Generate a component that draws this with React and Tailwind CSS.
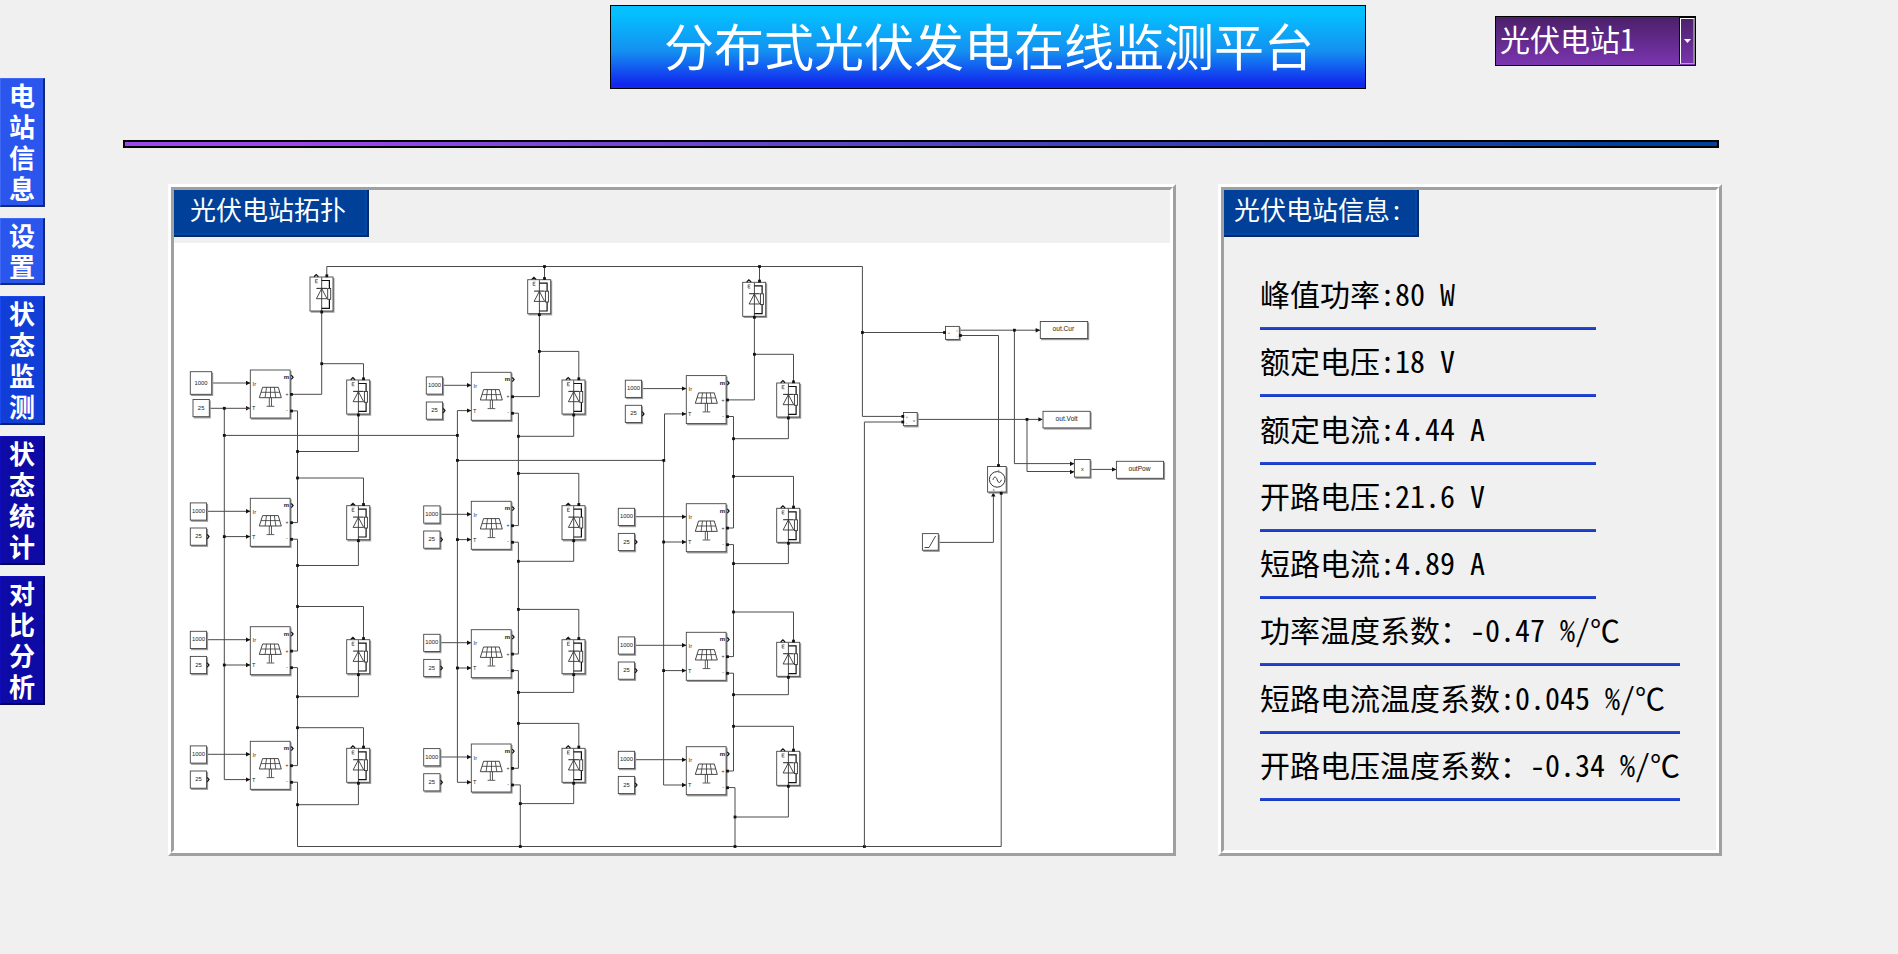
import React from "react";

const NAV = [
  { label: "电站信息", cls: "h-[129px] bg-[#2a56ee] border-t-[#3f68f5] border-l-[#3f68f5] border-r-[#14297a] border-b-[#14297a]" },
  { label: "设置", cls: "h-[67px] bg-[#2a56ee] border-t-[#3f68f5] border-l-[#3f68f5] border-r-[#14297a] border-b-[#14297a]" },
  { label: "状态监测", cls: "h-[129px] bg-[#123ed8] border-t-[#1a48ee] border-l-[#1a48ee] border-r-[#081f6c] border-b-[#081f6c]" },
  { label: "状态统计", cls: "h-[129px] bg-[#0d0aa5] border-t-[#100cb8] border-l-[#100cb8] border-r-[#060450] border-b-[#060450]" },
  { label: "对比分析", cls: "h-[129px] bg-[#0d0aa5] border-t-[#100cb8] border-l-[#100cb8] border-r-[#060450] border-b-[#060450]" },
];

const INFO = [
  { text: "峰值功率:80 W", width: "w-[336px]" },
  { text: "额定电压:18 V", width: "w-[336px]" },
  { text: "额定电流:4.44 A", width: "w-[336px]" },
  { text: "开路电压:21.6 V", width: "w-[336px]" },
  { text: "短路电流:4.89 A", width: "w-[336px]" },
  { text: "功率温度系数：-0.47 %/℃", width: "w-[420px]" },
  { text: "短路电流温度系数:0.045 %/℃", width: "w-[420px]" },
  { text: "开路电压温度系数：-0.34 %/℃", width: "w-[420px]" },
];

const INK = "#333";

const COLUMNS = [
  {
    pvX: 250.3, diodeX: 346.7, constX: 190.3, spine: 297.5, lastSpine: 297.5, tBus: 224.3,
    pvY: [370, 498.3, 626.7, 741.3], diodeY: [380, 505.7, 639.7, 748.3],
    low: [451.5, 565.5, 696.7, 804.7], high: [363.7, 478, 606.5, 727.7],
    top: { x: 310, y: 277 },
  },
  {
    pvX: 471.3, diodeX: 562, constX: 423.7, spine: 518.4, lastSpine: 520.3, tBus: 457.4,
    pvY: [372.3, 501.3, 629.7, 744], diodeY: [380, 505.7, 639.7, 748.3],
    low: [436.3, 561.3, 692.4, 803.6], high: [351.4, 473.4, 609.4, 723.4],
    top: { x: 527.7, y: 279.7 },
  },
  {
    pvX: 686.3, diodeX: 776.7, constX: 618.3, spine: 733.5, lastSpine: 735, tBus: 663.6,
    pvY: [375.6, 503.7, 632.3, 746.7], diodeY: [383, 508.3, 642.3, 751.3],
    low: [438.7, 563.6, 694.7, 817], high: [354.3, 476.4, 612, 726.3],
    top: { x: 742.7, y: 282.3 },
  },
];

function Wire({ d }) {
  return <path d={d} fill="none" stroke="#4a4a4a" strokeWidth="1" />;
}

function Dot({ x, y }) {
  return <rect x={x - 1.4} y={y - 1.4} width="2.8" height="2.8" fill="#111" />;
}

function Arrow({ x, y }) {
  return <path d={`M${x} ${y}l-4.3 -2.2v4.4z`} fill="#111" />;
}

function Box({ x, y, w, h }) {
  return (
    <g>
      <rect x={x + 0.8} y={y + 1} width={w + 0.7} height={h + 0.7} fill="#9a9a9a" />
      <rect x={x} y={y} width={w} height={h} fill="#fff" stroke="#444" strokeWidth="0.9" />
    </g>
  );
}

function Label({ x, y, size = 5.5, weight = 400, children }) {
  return (
    <text x={x} y={y} fontSize={size} fontWeight={weight} textAnchor="middle" fill="#222" fontFamily="Liberation Sans, Arial, sans-serif">
      {children}
    </text>
  );
}

function Constant({ x, y, w = 16.3, h = 17.2, value, open }) {
  return (
    <g>
      <Box x={x} y={y} w={w} h={h} />
      <Label x={x + w / 2} y={y + h / 2 + 1.5} size={5.9}>{value}</Label>
      {open && <path d={`M${x + w + 0.6} ${y + h / 2 - 2.2}l1.8 2.2l-1.8 2.2`} fill="none" stroke="#111" strokeWidth="1.2" />}
    </g>
  );
}

function Diode({ x, y }) {
  return (
    <g>
      <Box x={x} y={y} w={23} h={34} />
      <g transform={`translate(${x} ${y})`} fill="none" stroke={INK} strokeWidth="0.9">
        <path d="M4 -0.3L6.2 -2.4L8.4 -0.3" stroke="#111" strokeWidth="1.2" />
        <path d="M7.8 2.5H5.4V5.8H7.8M5.4 4.1H7.4" strokeWidth="0.6" />
        <path d="M11.7 0.5V34" />
        <path d="M11.7 3.5H19.4V31.3H11.7" stroke="#111" strokeWidth="1.2" />
        <rect x="17.7" y="11.5" width="3" height="10.8" fill="#fff" />
        <path d="M6.4 11.4H17" strokeWidth="1.1" />
        <path d="M11.7 11.6L17 21.7H6.4Z" fill="#fff" />
        <path d="M11.7 11.6V21.7" />
      </g>
      <Dot x={x + 16.8} y={y - 1.2} />
      <Dot x={x + 11.7} y={y + 35} />
    </g>
  );
}

function SolarModule({ x, y }) {
  return (
    <g>
      <Box x={x} y={y} w={39.8} h={48} />
      <g transform={`translate(${x} ${y})`} fill="none" stroke={INK} strokeWidth="0.8">
        <path d="M12.3 17.3H28L31 27.7H9Z" strokeWidth="0.9" />
        <path d="M10.8 22.3H29.5M16.2 17.3L14.8 27.7M20.2 17.3V27.7M24 17.3L25.5 27.7" />
        <path d="M19 27.7V36M21.2 27.7V36M16.3 36.3H24" />
        <path d="M41 5.2L42.8 7.3L41 9.4" stroke="#111" strokeWidth="1.2" />
      </g>
      <Label x={x + 36.2} y={y + 9} size={6} weight={700}>m</Label>
      <Label x={x + 4} y={y + 15.6} size={5.6}>Ir</Label>
      <Label x={x + 3.4} y={y + 40.3} size={5.6}>T</Label>
      <Label x={x + 36.6} y={y + 26} size={5}>+</Label>
      <Label x={x + 36.8} y={y + 42} size={5}>-</Label>
      <Dot x={x + 41.2} y={y + 24.4} />
      <Dot x={x + 41.2} y={y + 41} />
    </g>
  );
}

function StringColumn({ col, first, middle }) {
  const { pvX, diodeX, constX, spine, lastSpine, tBus, pvY, diodeY, low, high, top } = col;
  const out = pvX + 41;
  const plus = (i) => pvY[i] + 24.3;
  const minus = (i) => pvY[i] + 40.9;
  const tIn = (i) => pvY[i] + 38.3;
  const dTop = diodeX + 16.8;
  const dLow = diodeX + 11.7;
  const feed = top.x + 11.7;
  return (
    <g>
      <Wire d={`M${top.x + 16.8} 266.5V${top.y}`} />
      <Wire d={`M${out} ${plus(0)}H${feed}V${top.y + 34}`} />
      <Wire d={`M${feed} ${high[0]}H${dTop}V${diodeY[0]}`} />
      <Dot x={feed} y={high[0]} />
      <Wire d={`M${tBus} ${first || middle ? tIn(0) : 460.4}V${tIn(3)}H${pvX}`} />
      {[0, 1, 2, 3].map((i) => {
        const s = i === 3 ? lastSpine : spine;
        const big = first && i === 0;
        const cx = !first && i === 0 ? constX + (middle ? 2.6 : 7) : constX;
        return (
          <g key={i}>
            <Wire d={`M${out} ${minus(i)}H${s}V${i === 3 ? 846.5 : plus(i + 1)}${i === 3 ? "" : `H${out}`}`} />
            <Wire d={`M${s} ${low[i]}H${dLow}V${diodeY[i] + 34}`} />
            <Dot x={s} y={low[i]} />
            {i > 0 && <Wire d={`M${spine} ${high[i]}H${dTop}V${diodeY[i]}`} />}
            {i > 0 && <Dot x={spine} y={high[i]} />}
            {i > 0 && i < 3 && <Wire d={`M${tBus} ${tIn(i)}H${pvX}`} />}
            {i > 0 && i < 3 && <Dot x={tBus} y={tIn(i)} />}
            <Wire d={`M${cx + 16} ${pvY[i] + 13}H${pvX}`} />
            <Arrow x={pvX} y={pvY[i] + 13} />
            <Arrow x={pvX} y={tIn(i)} />
            {big ? (
              <g>
                <Wire d={`M209 ${tIn(0)}H${pvX}`} />
                <Dot x={tBus} y={tIn(0)} />
                <Constant x={190.3} y={371.7} w={21.4} h={22.6} value="1000" />
                <Constant x={193} y={399.5} value="25" />
              </g>
            ) : (
              <g>
                <Constant x={cx} y={pvY[i] + 4.6} value="1000" />
                <Constant x={cx} y={pvY[i] + 29.7} value="25" open />
              </g>
            )}
            <SolarModule x={pvX} y={pvY[i]} />
            <Diode x={diodeX} y={diodeY[i]} />
          </g>
        );
      })}
      <Diode x={top.x} y={top.y} />
    </g>
  );
}

function Topology() {
  return (
    <svg className="block h-[607px] w-[996px] bg-white" viewBox="174 243 996 607">
      <Wire d="M326.8 266.5H862.4V416.4H903" />
      <Wire d="M297.5 846.5H1001.2V493" />
      <Wire d="M224.3 435.4H457.4" />
      <Wire d="M457.4 460.4H664.5V413.9H686" />
      <Wire d="M457.4 410.6H471" />
      <StringColumn col={COLUMNS[0]} first />
      <StringColumn col={COLUMNS[1]} middle />
      <StringColumn col={COLUMNS[2]} />
      <Dot x={544.5} y={266.5} />
      <Dot x={759.5} y={266.5} />
      <Dot x={224.3} y={435.4} />
      <Dot x={457.4} y={435.4} />
      <Dot x={457.4} y={460.4} />
      <Dot x={663.8} y={460.4} />
      <Dot x={520.3} y={846.5} />
      <Dot x={735} y={846.5} />
      <Dot x={864.4} y={846.5} />

      <Wire d="M862.4 332.5H945" />
      <Dot x={862.4} y={332.5} />
      <Wire d="M960 330.2H1040" />
      <Wire d="M960 335.5H998.5V466" />
      <Wire d="M1014.4 330.2V463.6H1074" />
      <Wire d="M903 422H864.4V846.5" />
      <Wire d="M918 419.4H1042" />
      <Wire d="M1027 419.4V471.5H1074" />
      <Wire d="M1090 469.4H1116" />
      <Wire d="M938 542.4H993.4V493" />
      <Dot x={1014.4} y={330.2} />
      <Dot x={1027} y={419.4} />
      <Arrow x={1040} y={330.2} />
      <Arrow x={1042.7} y={419.4} />
      <Arrow x={1074.3} y={463.8} />
      <Arrow x={1074.3} y={472} />
      <Arrow x={1116.3} y={469.4} />
      <path d="M993.3 492.6l-2.2 3.8h4.4z" fill="#111" />

      <Box x={945.5} y={326.4} w={13.8} h={13} />
      <Dot x={944.5} y={332.5} />
      <Dot x={960.4} y={335.5} />
      <Label x={949} y={334} size={4}>+</Label>
      <Label x={957} y={331.5} size={3.5}>i</Label>
      <Label x={957} y={337} size={3.5}>-</Label>

      <Box x={903.4} y={412.5} w={13.8} h={13.2} />
      <Dot x={902.8} y={416.4} />
      <Dot x={902.8} y={422} />
      <Label x={907} y={418} size={4}>+</Label>
      <Label x={906.5} y={423.5} size={4}>-</Label>
      <Label x={914} y={421.6} size={4}>v</Label>

      <Box x={1040.3} y={321.5} w={47.4} h={17} />
      <Label x={1063.4} y={331.2} size={6.6}>out.Cur</Label>
      <Box x={1043} y={411.3} w={47.2} h={16.6} />
      <Label x={1066.6} y={420.8} size={6.6}>out.Volt</Label>
      <Box x={1116.4} y={461.3} w={47.2} h={17} />
      <Label x={1139.5} y={471.2} size={6.6}>outPow</Label>
      <Box x={1074.4} y={459.5} w={15.8} h={17.6} />
      <Label x={1082.3} y={470.8} size={5.5}>x</Label>

      <Box x={987.6} y={466.5} w={18.6} h={25.5} />
      <circle cx="997.2" cy="479.4" r="7.8" fill="none" stroke={INK} strokeWidth="1" />
      <path d="M993 479.8c0.8 -3.6 3.2 -3.6 4.2 0s3.2 3.4 4.2 0" fill="none" stroke={INK} strokeWidth="1" />
      <Dot x={998.5} y={465.5} />
      <Dot x={1001.2} y={493.3} />
      <Label x={998.5} y={471} size={3.5}>+</Label>
      <Label x={993.5} y={490.5} size={3.5}>s</Label>
      <Label x={1001.8} y={490.5} size={3.5}>-</Label>

      <Box x={922.4} y={533.6} w={15.9} h={16.6} />
      <path d="M924.5 547.5H929L935.6 536" fill="none" stroke={INK} strokeWidth="0.9" />
    </svg>
  );
}

function Panel({ title, titleClass, className, children }) {
  return (
    <section className={`h-[672px] border-[3px] border-t-white border-l-white border-r-[#a0a0a0] border-b-[#a0a0a0] ${className}`}>
      <div className="flex h-full flex-col items-start border-[3px] border-t-[#a0a0a0] border-l-[#a0a0a0] border-r-white border-b-white">
        <h2 className={`h-[47px] shrink-0 border-r-2 border-b-2 border-[#002b66] bg-[#004098] text-[26px] leading-[38px] whitespace-nowrap text-white shadow-[inset_-2px_-2px_0_#0047a8] ${titleClass}`}>
          {title}
        </h2>
        {children}
      </div>
    </section>
  );
}

export default function App() {
  return (
    <div className="flex h-[954px] w-[1898px] overflow-hidden bg-[#f0f0f0] font-['Noto_Sans_CJK_SC',sans-serif] text-black [font-feature-settings:'hwid']">
      <nav className="flex w-[45px] shrink-0 flex-col gap-[11px] pt-[78px]">
        {NAV.map((item) => (
          <button
            key={item.label}
            className={`w-[45px] shrink-0 border border-r-2 border-b-2 px-[8px] pb-[2px] text-center text-[26px] leading-[31px] font-bold break-all text-white ${item.cls}`}
          >
            {item.label}
          </button>
        ))}
      </nav>

      <div className="flex flex-1 flex-col pl-[78px]">
        <header className="flex h-[140px] items-start pl-[487px]">
          <h1 className="mt-[5px] h-[84px] w-[756px] border border-black bg-linear-to-b/srgb from-[#05bfff] from-10% via-[#1490f0] via-55% to-[#1228ee] to-95% pl-[2px] text-center text-[50px] leading-[76px] whitespace-nowrap text-white">
            分布式光伏发电在线监测平台
          </h1>
          <div className="mt-[16px] ml-[129px] flex h-[50px] w-[201px] border border-black bg-linear-to-b/srgb from-[#4b2069] to-[#7b35b0] text-white">
            <span className="flex-1 pl-[4px] text-[30px] leading-[43px] whitespace-nowrap">光伏电站1</span>
            <span className="flex h-[47px] w-[16px] border-t border-l border-black">
              <span className="flex flex-1 items-center justify-center border border-t-white border-r-2 border-l-white border-r-[#8c8c8c] border-b-[#b0a0b8]">
                <svg className="h-[4px] w-[7px]" viewBox="0 0 7 4">
                  <path d="M0 0H7L3.5 4Z" fill="#fff" />
                </svg>
              </span>
            </span>
          </div>
        </header>

        <div className="h-[8px] w-[1596px] border-2 border-black bg-linear-to-r/srgb from-[#9b48ea] from-10% to-[#004098] to-95%" />

        <main className="mt-[36px] ml-[45px] flex gap-[42px]">
          <Panel title="光伏电站拓扑" titleClass="w-[195px] pl-[16px]" className="w-[1008px]">
            <div className="mt-[6px]">
              <Topology />
            </div>
          </Panel>
          <Panel title="光伏电站信息:" titleClass="w-[195px] pl-[10px]" className="w-[504px]">
            <ul className="mt-[33px] ml-[36px] flex flex-col">
              {INFO.map((row) => (
                <li key={row.text} className="flex h-[67.3px] flex-col">
                  <span className="h-[57px] text-[30px] leading-[47px] whitespace-nowrap">{row.text}</span>
                  <span className={`h-[3px] shrink-0 bg-linear-to-b/srgb from-[#2d4be0] to-[#1238b4] ${row.width}`} />
                </li>
              ))}
            </ul>
          </Panel>
        </main>
      </div>
    </div>
  );
}
